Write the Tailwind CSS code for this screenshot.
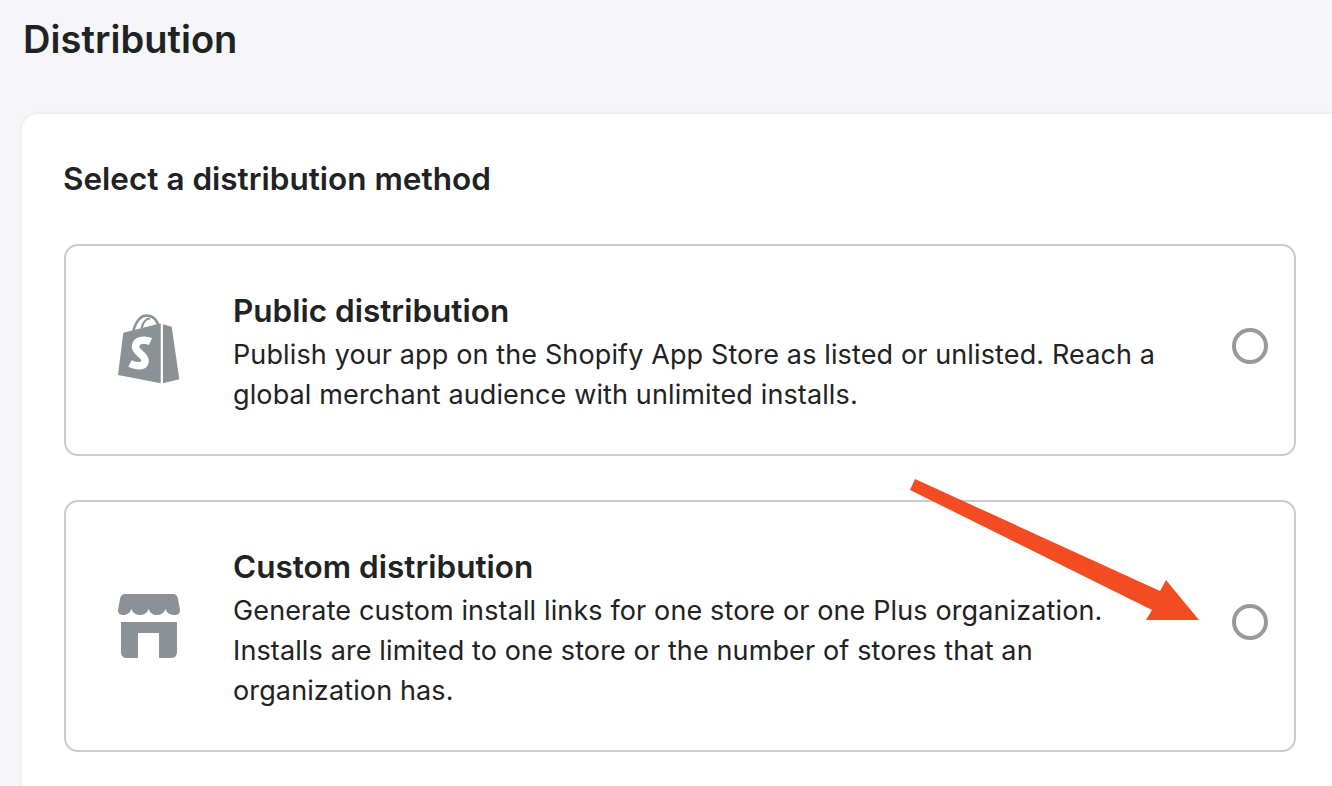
<!DOCTYPE html>
<html lang="en">
<head>
    <meta charset="UTF-8">
    <meta name="viewport" content="width=device-width, initial-scale=1.0">
    <title>Distribution</title>
    <script src="https://cdn.jsdelivr.net/npm/@tailwindcss/browser@4"></script>
</head>
<body class="bg-[#f6f6f8] text-[#202223] font-['Inter',sans-serif] h-[786px] overflow-hidden relative">
    <div class="pl-[22px]">
        <!-- Header -->
        <h1 class="h-[114px] pt-[15px] pl-px text-[38px] leading-[48px] font-semibold tracking-[0.05px]">Distribution</h1>

        <!-- Card -->
        <div class="bg-white rounded-l-[16px] shadow-[0_0_4px_rgba(0,0,0,0.08)] pl-[42px] pr-[36px] pt-[44px] h-[700px]">
            <h2 class="-ml-px text-[31.5px] leading-[42px] font-semibold mb-[44px]">Select a distribution method</h2>

            <div class="flex flex-col gap-[44px]">
                <div class="h-[212px] border-2 border-[#c9cccf] rounded-[14px] flex items-center pl-[52px] pr-[26px]">
                    <svg class="w-[64px] h-[72px] shrink-0 mr-[51px]" viewBox="0 0 64 72" fill="#8c9196">
                        <path d="M0 61 L5.3 18.7 L42.7 9.3 V69.3 Z"/>
                        <path d="M45 10.3 L53.7 12.7 L61.3 65.3 L45 69.3 Z"/>
                        <path d="M15.3 17 C18 7 23 1.5 28 1.5 C34 1.5 38 5 40 10" fill="none" stroke="#8c9196" stroke-width="2.6"/>
                        <path d="M23.7 14 C25 8 28.5 4.5 32 4.5" fill="none" stroke="#8c9196" stroke-width="2.2"/>
                        <path d="M32.5 27.5 C28 25.5 18.5 25 17.5 32 C16.5 38.5 28.5 41 27 48 C26 53 18 52.5 12 49.5" fill="none" stroke="#fff" stroke-width="7.5"/>
                    </svg>
                    <div class="flex-1 pt-[5px]">
                        <h3 class="text-[31.5px] leading-[40px] font-semibold mb-[4px]">Public distribution</h3>
                        <p class="text-[27px] leading-[40px] tracking-[0.125px] w-[940px]">Publish your app on the Shopify App Store as listed or unlisted. Reach a global merchant audience with unlimited installs.</p>
                    </div>
                    <div class="w-[36px] h-[36px] mb-[8px] rounded-full border-[4px] border-[#98999b] shrink-0"></div>
                </div>

                <div class="h-[252px] border-2 border-[#c9cccf] rounded-[14px] flex items-center pl-[52px] pr-[26px]">
                    <svg class="w-[62px] h-[64px] shrink-0 mr-[53px]" viewBox="0 0 62 64" fill="#8c9196">
                        <path d="M7 0 H55 Q59 0 60 5 L62 16 Q62 21 57 21 C52 21 49 19 47.7 15 C46 19 43 21 39 21 C35 21 32 19 30.7 15 C29 19 26 21 22 21 C18 21 15 19 13.3 15 C12 19 9 21 5 21 Q0 21 0 16 L2 5 Q3 0 7 0 Z"/>
                        <path d="M3 28 H59 V58 C59 61 57 64 54 64 H41 V39 H20 V64 H8 C5 64 3 61 3 58 Z"/>
                    </svg>
                    <div class="flex-1 pt-[5px]">
                        <h3 class="text-[31.5px] leading-[40px] font-semibold mb-[4px]">Custom distribution</h3>
                        <p class="text-[27px] leading-[40px] tracking-[0.125px] w-[900px]">Generate custom install links for one store or one Plus organization. Installs are limited to one store or the number of stores that an organization has.</p>
                    </div>
                    <div class="w-[36px] h-[36px] mb-[8px] rounded-full border-[4px] border-[#98999b] shrink-0"></div>
                </div>
            </div>
        </div>
    </div>

    <!-- Annotation arrow -->
    <svg class="absolute left-[900px] top-[470px] w-[320px] h-[170px]" viewBox="0 0 320 170" fill="#f34b22">
        <path d="M15 9 L260 121 L266 110 L299 150 L246 150 L252 140 L10 20 Z"/>
    </svg>
</body>
</html>
